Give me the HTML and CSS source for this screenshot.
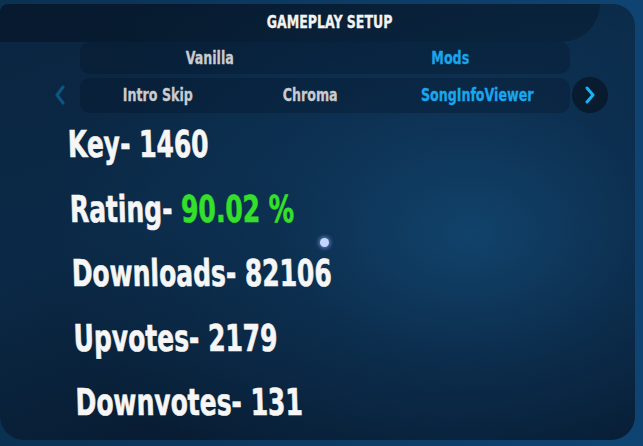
FILE: index.html
```html
<!DOCTYPE html>
<html>
<head>
<meta charset="utf-8">
<link rel="stylesheet" href="styles.css">
</head>
<body>
<div class="panel">
  <div class="header"><span class="title">GAMEPLAY SETUP</span></div>
  <div class="row1">
    <span class="tab">Vanilla</span>
    <span class="tab active">Mods</span>
  </div>
  <div class="modrow">
    <div class="arrow-left">
      <svg width="12" height="20" viewBox="0 0 12 20"><path d="M9 2 L3 10 L9 18" fill="none" stroke="#0c5683" stroke-width="3" stroke-linecap="round" stroke-linejoin="round"/></svg>
    </div>
    <div class="row2">
      <span class="tab">Intro Skip</span>
      <span class="tab">Chroma</span>
      <span class="tab active">SongInfoViewer</span>
    </div>
    <div class="arrow-right">
      <svg width="12" height="20" viewBox="0 0 12 20"><path d="M3 3 L9 10 L3 17" fill="none" stroke="#1ab2f6" stroke-width="3" stroke-linecap="round" stroke-linejoin="round"/></svg>
    </div>
  </div>
  <div class="stats">
    <div class="stat"><span class="txt">Key- 1460</span></div>
    <div class="stat"><span class="txt">Rating- <span class="green">90.02 %</span></span></div>
    <div class="stat"><span class="txt">Downloads- 82106</span></div>
    <div class="stat"><span class="txt">Upvotes- 2179</span></div>
    <div class="stat"><span class="txt">Downvotes- 131</span></div>
  </div>
  <div class="cursor"></div>
</div>
</body>
</html>
```
FILE: styles.css
```css
html, body {
  margin: 0;
  padding: 0;
}
body {
  width: 643px;
  height: 446px;
  overflow: hidden;
  background: linear-gradient(90deg, #0a3152 0%, #0f4472 100%);
  font-family: "DejaVu Sans Condensed", "DejaVu Sans", sans-serif;
  font-weight: bold;
  padding-top: 4px;
  box-sizing: border-box;
}
.panel {
  position: relative;
  width: 635px;
  height: 436px;
  border-radius: 8px 22px 24px 24px;
  background:
    radial-gradient(ellipse 420px 300px at 470px 230px, rgba(18, 70, 112, 0.9) 0%, rgba(14, 55, 92, 0.6) 45%, rgba(14, 55, 92, 0) 100%),
    linear-gradient(160deg, #0a2540 0%, #0b2946 40%, #081c32 75%, #06162a 100%);
  overflow: hidden;
}
.header {
  height: 38px;
  width: 600px;
  background: linear-gradient(90deg, rgba(3, 12, 24, 0.45), rgba(3, 12, 24, 0.3));
  border-radius: 8px 0 40px 0;
  display: flex;
  justify-content: center;
}
.title {
  display: inline-block;
  color: #f2f2f2;
  font-size: 17px;
  line-height: 20px;
  margin-top: 8px;
  margin-left: 60px;
  transform: scaleX(0.82);
  -webkit-text-stroke: 0.3px #f2f2f2;
}
.row1 {
  margin-left: 80px;
  width: 490px;
  height: 32px;
  box-sizing: border-box;
  padding-left: 10px;
  border-radius: 10px;
  background: rgba(4, 16, 32, 0.28);
  display: grid;
  grid-template-columns: 1fr 1fr;
  align-items: center;
  justify-items: center;
}
.modrow {
  display: flex;
  align-items: center;
  margin-top: 3px;
}
.arrow-left {
  width: 20px;
  margin-left: 50px;
  display: flex;
  justify-content: center;
}
.row2 {
  margin-left: 10px;
  width: 490px;
  height: 35px;
  box-sizing: border-box;
  border-radius: 10px;
  background: rgba(4, 16, 32, 0.28);
  display: grid;
  grid-template-columns: 155px 150px 185px;
  align-items: center;
  justify-items: center;
}
.arrow-right {
  width: 36px;
  height: 36px;
  margin-left: 2px;
  border-radius: 50%;
  background: #081b2f;
  display: flex;
  align-items: center;
  justify-content: center;
}
.tab {
  display: inline-block;
  color: #c9cbcf;
  font-size: 18px;
  line-height: 20px;
  transform: scaleX(0.78);
  -webkit-text-stroke: 0.3px currentColor;
}
.tab.active {
  color: #1aa6ec;
}
.stats {
  margin-top: 0;
  padding-left: 67px;
  transform: skewX(1.7deg);
  transform-origin: 0 0;
}
.stat {
  color: #f6f6f6;
  font-size: 37px;
  line-height: 64.5px;
  white-space: nowrap;
}
.txt {
  display: inline-block;
  transform: scaleX(0.75);
  transform-origin: 0 50%;
  -webkit-text-stroke: 0.6px currentColor;
}
.green {
  color: #34e02a;
}
.cursor {
  position: absolute;
  left: 320px;
  top: 234px;
  width: 9px;
  height: 9px;
  border-radius: 50%;
  background: #c4d6ff;
  box-shadow: 0 0 4px 1px rgba(150, 180, 255, 0.7);
}
```
